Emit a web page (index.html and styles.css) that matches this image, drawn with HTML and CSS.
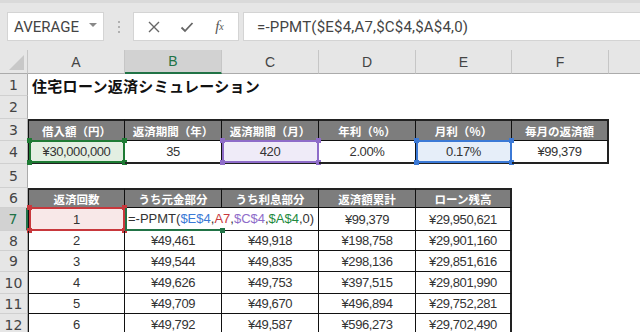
FILE: index.html
```html
<!DOCTYPE html>
<html lang="ja">
<head>
    <meta charset="UTF-8">
    <title>住宅ローン返済シミュレーション</title>
    <link rel="stylesheet" href="styles.css">
</head>
<body>
<div class="app">
    <div class="toolbar">
        <div class="namebox"><span>AVERAGE</span><span class="caret"></span></div>
        <div class="grip"><i></i><i></i><i></i></div>
        <div class="fxbtns">
            <span class="btn">
                <svg width="12" height="12" viewBox="0 0 12 12"><path d="M1 1L11 11M11 1L1 11" stroke="#666" stroke-width="1.4" fill="none"/></svg>
            </span>
            <span class="btn">
                <svg width="14" height="12" viewBox="0 0 14 12"><path d="M1.5 6.5L5 10L12.5 2" stroke="#666" stroke-width="1.8" fill="none"/></svg>
            </span>
            <span class="btn fx">f<sub>x</sub></span>
        </div>
        <div class="formula">=-PPMT($E$4,A7,$C$4,$A$4,0)</div>
    </div>

    <div class="sheet">
        <!-- 列見出し -->
        <div class="corner"><span></span></div>
        <div class="ch">A</div>
        <div class="ch sel">B</div>
        <div class="ch">C</div>
        <div class="ch">D</div>
        <div class="ch">E</div>
        <div class="ch">F</div>
        <div class="ch last"></div>

        <!-- 1 -->
        <div class="rh">1</div>
        <div class="c wide title">住宅ローン返済シミュレーション</div>
        <!-- 2 -->
        <div class="rh">2</div>
        <div class="c wide"></div>

        <!-- 3 -->
        <div class="rh">3</div>
        <div class="th tl tt">借入額（円）</div>
        <div class="th tt">返済期間（年）</div>
        <div class="th tt">返済期間（月）</div>
        <div class="th tt">年利（％）</div>
        <div class="th tt">月利（％）</div>
        <div class="th tt tr">毎月の返済額</div>
        <div class="c"></div>

        <!-- 4 -->
        <div class="rh">4</div>
        <div class="t tl tb fill-green">¥30,000,000<span class="range green"><b class="tl"></b><b class="tr"></b><b class="bl"></b><b class="br"></b></span></div>
        <div class="t tb">35</div>
        <div class="t tb fill-purple">420<span class="range purple"><b class="tl"></b><b class="tr"></b><b class="bl"></b><b class="br"></b></span></div>
        <div class="t tb">2.00%</div>
        <div class="t tb fill-blue">0.17%<span class="range blue"><b class="tl"></b><b class="tr"></b><b class="bl"></b><b class="br"></b></span></div>
        <div class="t tb tr">¥99,379</div>
        <div class="c"></div>

        <!-- 5 -->
        <div class="rh">5</div>
        <div class="c wide"></div>

        <!-- 6 -->
        <div class="rh">6</div>
        <div class="th tl tt">返済回数</div>
        <div class="th tt">うち元金部分</div>
        <div class="th tt">うち利息部分</div>
        <div class="th tt">返済額累計</div>
        <div class="th tt tr">ローン残高</div>
        <div class="c span2"></div>

        <!-- 7 -->
        <div class="rh sel">7</div>
        <div class="t tl fill-red">1<span class="range red"><b class="tl"></b><b class="tr"></b><b class="bl"></b><b class="br"></b></span></div>
        <div class="t edit"><span class="ftext">=-PPMT(<em class="k-blue">$E$4</em>,<em class="k-red">A7</em>,<em class="k-purple">$C$4</em>,<em class="k-green">$A$4</em>,0)</span><b class="handle"></b></div>
        <div class="t blank"></div>
        <div class="t">¥99,379</div>
        <div class="t tr">¥29,950,621</div>
        <div class="c span2"></div>

        <!-- 8 -->
        <div class="rh">8</div>
        <div class="t tl">2</div>
        <div class="t">¥49,461</div>
        <div class="t">¥49,918</div>
        <div class="t">¥198,758</div>
        <div class="t tr">¥29,901,160</div>
        <div class="c span2"></div>

        <!-- 9 -->
        <div class="rh">9</div>
        <div class="t tl">3</div>
        <div class="t">¥49,544</div>
        <div class="t">¥49,835</div>
        <div class="t">¥298,136</div>
        <div class="t tr">¥29,851,616</div>
        <div class="c span2"></div>

        <!-- 10 -->
        <div class="rh">10</div>
        <div class="t tl">4</div>
        <div class="t">¥49,626</div>
        <div class="t">¥49,753</div>
        <div class="t">¥397,515</div>
        <div class="t tr">¥29,801,990</div>
        <div class="c span2"></div>

        <!-- 11 -->
        <div class="rh">11</div>
        <div class="t tl">5</div>
        <div class="t">¥49,709</div>
        <div class="t">¥49,670</div>
        <div class="t">¥496,894</div>
        <div class="t tr">¥29,752,281</div>
        <div class="c span2"></div>

        <!-- 12 -->
        <div class="rh">12</div>
        <div class="t tl">6</div>
        <div class="t">¥49,792</div>
        <div class="t">¥49,587</div>
        <div class="t">¥596,273</div>
        <div class="t tr">¥29,702,490</div>
        <div class="c span2"></div>
    </div>
</div>
</body>
</html>
```

FILE: styles.css
```css
html, body {
    margin: 0;
    padding: 0;
}

body {
    width: 640px;
    height: 332px;
    overflow: hidden;
    background: #fff;
    font-family: "Liberation Sans", Arial, sans-serif;
}

.app {
    width: 640px;
    height: 332px;
    overflow: hidden;
}

/* 数式バー */
.toolbar {
    height: 50px;
    box-sizing: border-box;
    padding: 9px 0 9px 7px;
    background: #e6e6e6;
    border-top: 3px solid #dadada;
    display: flex;
    align-items: stretch;
}

.namebox {
    width: 97px;
    box-sizing: border-box;
    background: #fff;
    border: 1px solid #d4d4d4;
    display: flex;
    align-items: center;
    justify-content: space-between;
    padding: 0 6px 0 6px;
    font-family: Roboto, "Liberation Sans", sans-serif;
    font-size: 15px;
    color: #444;
}

.caret {
    width: 0;
    height: 0;
    border-left: 4px solid transparent;
    border-right: 4px solid transparent;
    border-top: 4px solid #888;
    margin-bottom: 4px;
}

.grip {
    width: 29px;
    display: flex;
    flex-direction: column;
    align-items: center;
    justify-content: center;
    gap: 3px;
}

.grip i {
    width: 2px;
    height: 2px;
    background: #b0b0b0;
}

.fxbtns {
    width: 106px;
    box-sizing: border-box;
    background: #fff;
    border: 1px solid #d4d4d4;
    display: flex;
    align-items: center;
    padding-left: 3px;
}

.btn {
    width: 33px;
    display: flex;
    align-items: center;
    justify-content: center;
}

.btn.fx {
    font-family: "Liberation Serif", serif;
    font-style: italic;
    font-size: 15px;
    color: #555;
}

.btn.fx sub {
    font-size: 10px;
    vertical-align: -1px;
}

.formula {
    flex: 1;
    margin-left: 4px;
    background: #fff;
    border: 1px solid #d4d4d4;
    border-right: none;
    display: flex;
    align-items: center;
    padding-left: 13px;
    font-family: Roboto, "Liberation Sans", sans-serif;
    font-size: 15px;
    letter-spacing: 0.2px;
    color: #444;
}

/* シート */
.sheet {
    display: grid;
    grid-template-columns: 28px 97px 97px 97px 97px 96px 97px 1fr;
    grid-template-rows: 24px 22px 23px 22px 23px 24px 20px 23px 20px 21px 22px 20px 22px;
    background: #fff;
}

.corner {
    background: #e6e6e6;
    border-right: 1px solid #c6c6c6;
    border-bottom: 1px solid #ababab;
    position: relative;
}

.corner span {
    position: absolute;
    right: 3px;
    bottom: 3px;
    width: 0;
    height: 0;
    border-left: 15px solid transparent;
    border-bottom: 15px solid #c8c8c8;
}

.ch {
    background: #e6e6e6;
    border-right: 1px solid #c6c6c6;
    border-bottom: 1px solid #ababab;
    display: flex;
    align-items: center;
    justify-content: center;
    font-size: 14px;
    color: #444;
}

.ch.sel {
    background: #d2d2d2;
    color: #217346;
    border-bottom: 2px solid #217346;
}

.ch.last {
    border-right: none;
}

.rh {
    background: #e6e6e6;
    border-right: 1px solid #ababab;
    border-bottom: 1px solid #d0d0d0;
    display: flex;
    align-items: center;
    justify-content: center;
    font-family: "DejaVu Sans", sans-serif;
    font-size: 14px;
    color: #444;
}

.rh.sel {
    background: #d2d2d2;
    color: #217346;
    border-right: 2px solid #217346;
}

.c.wide {
    grid-column: span 7;
}

.c.span2 {
    grid-column: span 2;
}

.title {
    font-family: "Noto Sans CJK JP", sans-serif;
    font-weight: bold;
    font-size: 15px;
    letter-spacing: 0.3px;
    color: #111;
    padding-left: 4px;
    display: flex;
    align-items: center;
    white-space: nowrap;
}

/* 表 */
.th, .t {
    box-sizing: border-box;
    border-right: 1px solid #111;
    border-bottom: 1px solid #111;
    display: flex;
    align-items: center;
    justify-content: center;
    white-space: nowrap;
    position: relative;
}

.th {
    background: #7d7d7d;
    color: #fff;
    font-family: "Noto Sans CJK JP", sans-serif;
    font-weight: bold;
    font-size: 11.5px;
}

.t {
    color: #333;
    font-size: 13px;
    letter-spacing: -0.4px;
}

.tl {
    border-left: 1px solid #111;
}

.tt {
    border-top: 2px solid #222;
}

.tr {
    border-right: 2px solid #222;
}

.tb {
    border-bottom: 2px solid #222;
}

.fill-green { background: #e3efe2; }
.fill-purple { background: #efebf8; }
.fill-blue { background: #e6eef9; }
.fill-red { background: #f8e8e8; }

/* 参照範囲の枠 */
.range {
    position: absolute;
    top: -1px;
    left: 0;
    right: -1px;
    bottom: -1px;
    border: 2px solid;
}

.range.green { border-color: #1e7b34; color: #1e7b34; }
.range.purple { border-color: #8e6cc9; color: #8e6cc9; }
.range.blue { border-color: #3b79d6; color: #3b79d6; }
.range.red { border-color: #c8383c; color: #c8383c; }

.range b {
    position: absolute;
    width: 5px;
    height: 5px;
    background: currentColor;
}

.range b.tl { top: -4px; left: -4px; border: none; }
.range b.tr { top: -4px; right: -4px; border: none; }
.range b.bl { bottom: -4px; left: -4px; border: none; }
.range b.br { bottom: -4px; right: -4px; border: none; }

/* 編集中のセル */
.t.edit {
    justify-content: flex-start;
    border-left: 2px solid #217346;
    border-bottom: 2px solid #217346;
    border-right: none;
    z-index: 1;
    overflow: visible;
}

.ftext {
    padding-left: 1px;
    font-size: 13px;
    letter-spacing: 0;
    color: #333;
}

.ftext em {
    font-style: normal;
}

.k-blue { color: #3b79d6; }
.k-red { color: #c8383c; }
.k-purple { color: #8e6cc9; }
.k-green { color: #1e8a3e; }

.handle {
    position: absolute;
    right: -3px;
    bottom: -4px;
    width: 5px;
    height: 5px;
    background: #217346;
}

.t.blank {
    background: transparent;
}
```
